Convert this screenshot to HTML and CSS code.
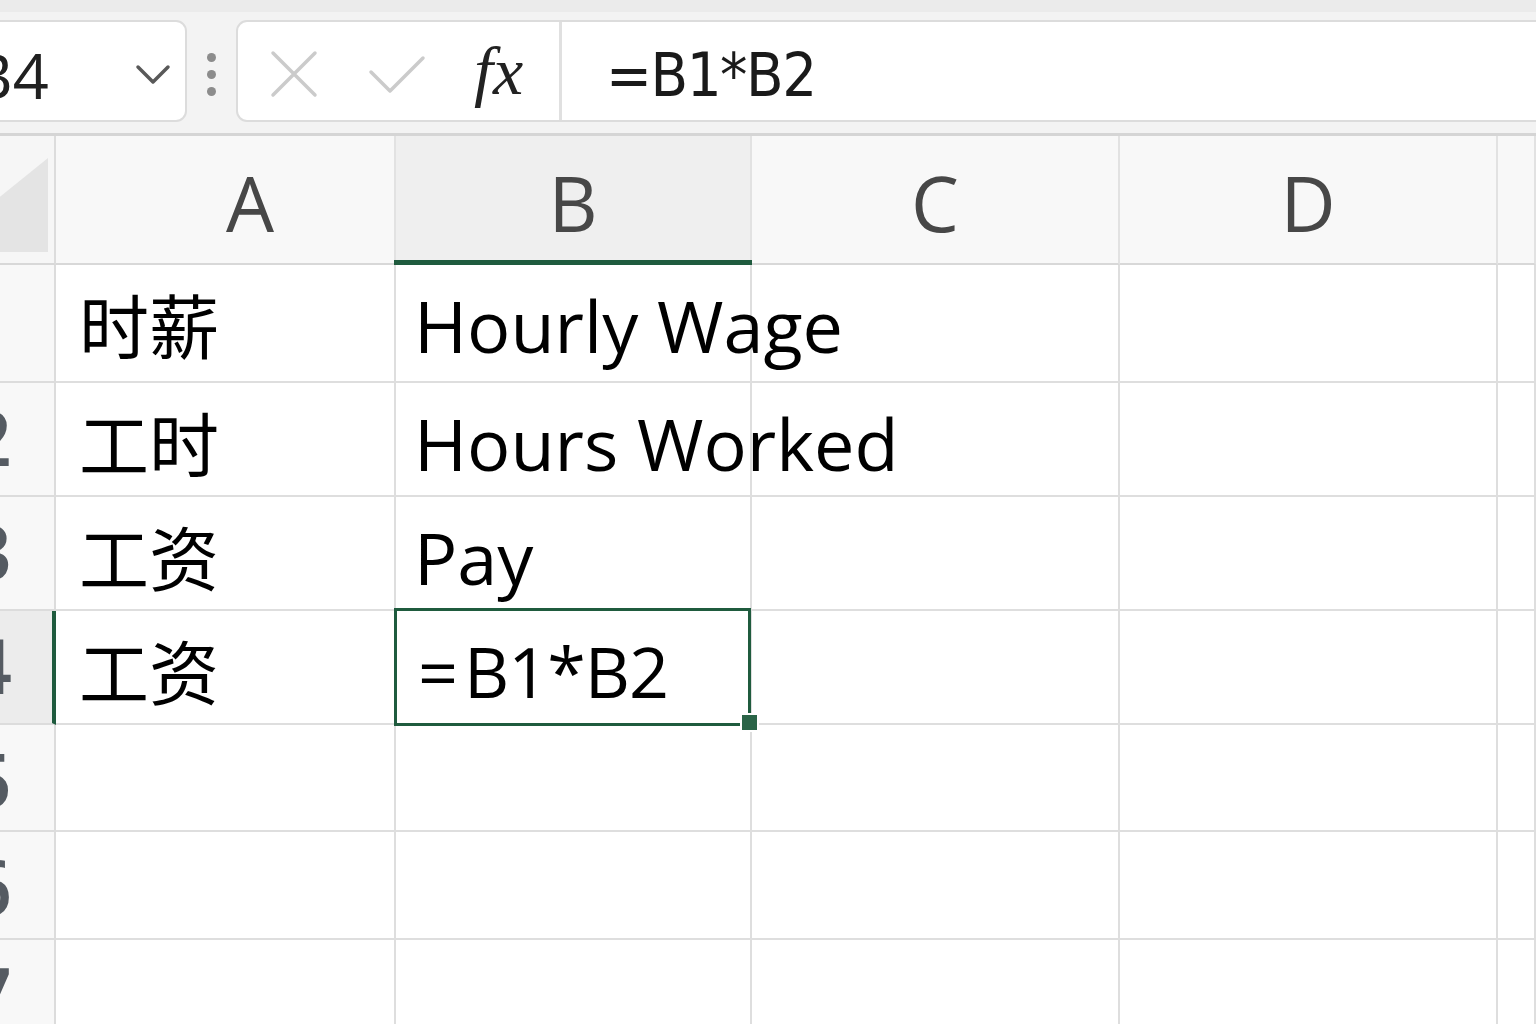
FILE: index.html
```html
<!DOCTYPE html>
<html lang="zh">
<head>
<meta charset="utf-8">
<title>Sheet</title>
<link rel="stylesheet" href="styles.css">
</head>
<body>
<div class="app">
  <div class="toolbar">
    <div class="namebox">
      <span class="name">B4</span>
      <svg class="chev" width="36" height="24" viewBox="0 0 36 24"><path d="M3 4 L18 19 L33 4" fill="none" stroke="#595959" stroke-width="3.5" stroke-linecap="round" stroke-linejoin="round"/></svg>
    </div>
    <div class="grip"><i></i><i></i><i></i></div>
    <div class="formula">
      <div class="tools">
        <svg class="ico-x" width="48" height="48" viewBox="0 0 48 48"><path d="M3 3 L45 45 M45 3 L3 45" stroke="#cbcbcb" stroke-width="3.5" stroke-linecap="round"/></svg>
        <svg class="ico-check" width="58" height="42" viewBox="0 0 58 42"><path d="M3 18 L22 37 L55 4" fill="none" stroke="#cbcbcb" stroke-width="3.5" stroke-linecap="round" stroke-linejoin="round"/></svg>
        <span class="fx">fx</span>
      </div>
      <div class="input">=B1*B2</div>
    </div>
  </div>
  <div class="sheet">
    <div class="corner"><svg width="56" height="127" viewBox="0 0 56 127"><polygon points="-20,77 48,22 48,116 -20,116" fill="#e4e4e4"/></svg></div>
    <div class="ch cha">A</div>
    <div class="ch sel">B</div>
    <div class="ch">C</div>
    <div class="ch">D</div>
    <div class="ch"></div>

    <div class="rh"><span>1</span></div>
    <div class="c zh">时薪</div>
    <div class="c en">Hourly Wage</div>
    <div class="c"></div><div class="c"></div><div class="c"></div>

    <div class="rh"><span>2</span></div>
    <div class="c zh">工时</div>
    <div class="c en">Hours Worked</div>
    <div class="c"></div><div class="c"></div><div class="c"></div>

    <div class="rh"><span>3</span></div>
    <div class="c zh">工资</div>
    <div class="c en">Pay</div>
    <div class="c"></div><div class="c"></div><div class="c"></div>

    <div class="rh rsel"><span>4</span></div>
    <div class="c zh">工资</div>
    <div class="c en active"><span class="eq">=</span>B1*B2<span class="handle"></span></div>
    <div class="c"></div><div class="c"></div><div class="c"></div>

    <div class="rh"><span>5</span></div>
    <div class="c"></div><div class="c"></div><div class="c"></div><div class="c"></div><div class="c"></div>

    <div class="rh"><span>6</span></div>
    <div class="c"></div><div class="c"></div><div class="c"></div><div class="c"></div><div class="c"></div>

    <div class="rh"><span>7</span></div>
    <div class="c"></div><div class="c"></div><div class="c"></div><div class="c"></div><div class="c"></div>
  </div>
</div>
</body>
</html>
```

FILE: styles.css
```css
* { box-sizing: border-box; }
html, body { margin: 0; padding: 0; }
body {
  width: 1536px;
  height: 1024px;
  overflow: hidden;
  background: #ffffff;
  font-family: "Open Sans", "Noto Sans", sans-serif;
}
.app { width: 1536px; height: 1024px; overflow: hidden; }

.toolbar {
  height: 136px;
  display: flex;
  align-items: flex-start;
  padding-top: 20px;
  background: linear-gradient(#ebebeb 0, #ebebeb 12px, #f3f3f3 12px);
  border-bottom: 3px solid #d5d5d5;
}
.namebox {
  margin-left: -40px;
  width: 227px;
  height: 102px;
  background: #ffffff;
  border: 2px solid #dcdcdc;
  border-radius: 11px;
  display: flex;
  align-items: center;
  padding-left: 10px;
  flex-shrink: 0;
}
.name {
  font-size: 63px;
  color: #202020;
  line-height: 1;
  margin-top: 6px;
}
.chev { margin-left: auto; margin-right: 14px; margin-top: 8px; }

.grip {
  width: 49px;
  height: 102px;
  display: flex;
  flex-direction: column;
  align-items: center;
  justify-content: center;
  gap: 8px;
  padding-top: 6px;
  flex-shrink: 0;
}
.grip i {
  display: block;
  width: 9px;
  height: 9px;
  border-radius: 50%;
  background: #8c8c8c;
}

.formula {
  flex: 1;
  height: 102px;
  margin-right: -20px;
  background: #ffffff;
  border: 2px solid #dcdcdc;
  border-radius: 11px;
  display: flex;
  align-items: stretch;
}
.tools {
  width: 324px;
  border-right: 3px solid #e0e0e0;
  display: flex;
  align-items: center;
  padding-left: 32px;
  flex-shrink: 0;
}
.ico-x { margin-top: 6px; }
.ico-check { margin-left: 50px; margin-top: 8px; }
.fx {
  margin-left: 48px;
  font-family: "Liberation Serif", "DejaVu Serif", serif;
  font-style: italic;
  font-size: 68px;
  color: #222222;
  line-height: 1;
  margin-top: 0;
}
.input {
  padding-left: 44px;
  display: flex;
  align-items: center;
  font-family: "DejaVu Sans Condensed", "DejaVu Sans", sans-serif;
  font-stretch: condensed;
  font-size: 61px;
  color: #1a1a1a;
  letter-spacing: -1.5px;
  padding-top: 6px;
}

.sheet {
  display: grid;
  grid-template-columns: 56px 340px 356px 368px 378px 1fr;
  grid-template-rows: 129px 118px 114px 114px 114px 107px 108px 100px;
}
.corner {
  background: #f6f6f6;
  border-right: 2px solid #dcdcdc;
  border-bottom: 2px solid #d8d8d8;
  overflow: hidden;
}
.corner svg { display: block; }
.ch {
  background: #f8f8f8;
  border-right: 2px solid #e2e2e2;
  border-bottom: 2px solid #d8d8d8;
  text-align: center;
  font-size: 76px;
  line-height: 129px;
  color: #474747;
  padding-top: 2px;
}
.ch.cha { padding-left: 50px; }
.ch.sel {
  background: #efefef;
  position: relative;
}
.ch.sel::after {
  content: "";
  position: absolute;
  left: -2px;
  right: -2px;
  bottom: -2px;
  height: 5px;
  background: #1f5b3e;
}
.rh {
  background: #f8f8f8;
  border-right: 2px solid #dcdcdc;
  border-bottom: 2px solid #dcdcdc;
  display: flex;
  justify-content: flex-end;
  padding-right: 42px;
  font-size: 76px;
  font-weight: 600;
  color: #555b62;
  line-height: 108px;
  overflow: hidden;
  white-space: nowrap;
}
.rh span { flex-shrink: 0; }
.rh.rsel {
  background: #ececec;
  border-right: 4px solid #1f5b3e;
  padding-right: 40px;
}
.c {
  border-right: 2px solid #dedede;
  border-bottom: 2px solid #dedede;
  white-space: nowrap;
  color: #000000;
}
.c.en {
  font-size: 72px;
  line-height: 100px;
  padding-top: 10px;
  padding-left: 18px;
}
.c.zh {
  font-family: "Noto Sans CJK SC", "Noto Sans", sans-serif;
  font-size: 70px;
  line-height: 100px;
  padding-top: 9px;
  padding-left: 23px;
}
.c.active {
  position: relative;
  padding-left: 22px;
  font-size: 70px;
  letter-spacing: -1px;
}
.c.active .eq { margin-right: 7px; }
.c.active::after {
  content: "";
  position: absolute;
  left: -2px;
  top: -3px;
  right: -1px;
  bottom: -3px;
  border: 3px solid #1f5b3e;
  pointer-events: none;
}
.handle {
  position: absolute;
  right: -7px;
  bottom: -7px;
  width: 15px;
  height: 15px;
  background: #2a6447;
  outline: 2px solid #ffffff;
  z-index: 2;
}
```
